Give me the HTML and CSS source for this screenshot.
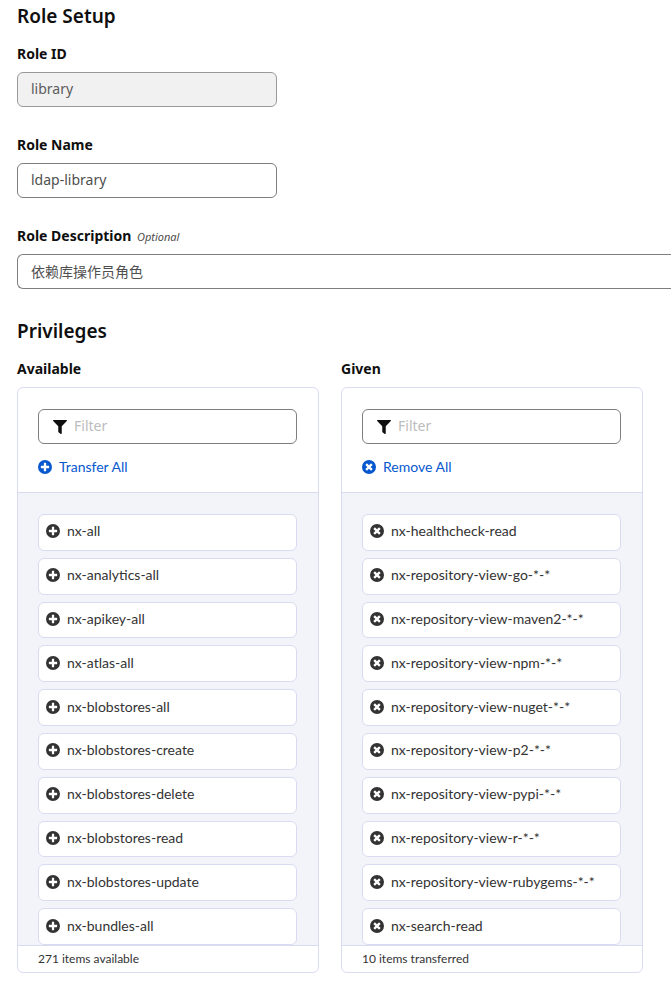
FILE: index.html
```html
<!DOCTYPE html>
<html lang="en">
<head>
<meta charset="utf-8">
<title>Role Setup</title>
<link rel="stylesheet" href="styles.css">
</head>
<body>
<svg class="sprite" aria-hidden="true">
  <symbol id="plus" viewBox="0 0 512 512"><path fill="currentColor" d="M256 0a256 256 0 1 0 0 512 256 256 0 0 0 0-512zm152 284c0 8-6 14-14 14h-96v96c0 8-6 14-14 14h-56c-8 0-14-6-14-14v-96h-96c-8 0-14-6-14-14v-56c0-8 6-14 14-14h96v-96c0-8 6-14 14-14h56c8 0 14 6 14 14v96h96c8 0 14 6 14 14z"/></symbol>
  <symbol id="cross" viewBox="0 0 512 512"><path fill="currentColor" d="M256 0a256 256 0 1 0 0 512 256 256 0 0 0 0-512zm126 322c5 5 5 13 0 18l-42 42c-5 5-13 5-18 0l-66-66-66 66c-5 5-13 5-18 0l-42-42c-5-5-5-13 0-18l66-66-66-66c-5-5-5-13 0-18l42-42c5-5 13-5 18 0l66 66 66-66c5-5 13-5 18 0l42 42c5 5 5 13 0 18l-66 66z"/></symbol>
  <symbol id="filter" viewBox="0 0 512 512"><path fill="currentColor" d="M488 0H24C3 0-8 26 7 41l185 185v206c0 8 4 15 10 20l80 56c16 11 38 0 38-20V226L505 41c15-15 4-41-17-41z"/></symbol>
</svg>
<main class="page">
  <form>
    <section>
      <h2>Role Setup</h2>
      <div class="fields">
        <div class="field">
          <label for="role-id">Role ID</label>
          <input class="text-input short" id="role-id" type="text" value="library" disabled>
        </div>
        <div class="field">
          <label for="role-name">Role Name</label>
          <input class="text-input short" id="role-name" type="text" value="ldap-library">
        </div>
        <div class="field">
          <label for="role-desc">Role Description <span class="optional">Optional</span></label>
          <input class="text-input bleed" id="role-desc" type="text" value="依赖库操作员角色">
        </div>
      </div>
    </section>
    <section>
      <h2>Privileges</h2>
      <div class="transfer">
        <div class="field">
          <label for="filter-available">Available</label>
          <div class="panel">
            <div class="controls">
              <div class="filter">
                <svg class="icon"><use href="#filter"/></svg>
                <input id="filter-available" type="text" placeholder="Filter">
              </div>
              <button class="move-all" type="button"><svg class="icon"><use href="#plus"/></svg>Transfer All</button>
            </div>
            <div class="items">
              <button type="button"><svg class="icon"><use href="#plus"/></svg>nx-all</button>
              <button type="button"><svg class="icon"><use href="#plus"/></svg>nx-analytics-all</button>
              <button type="button"><svg class="icon"><use href="#plus"/></svg>nx-apikey-all</button>
              <button type="button"><svg class="icon"><use href="#plus"/></svg>nx-atlas-all</button>
              <button type="button"><svg class="icon"><use href="#plus"/></svg>nx-blobstores-all</button>
              <button type="button"><svg class="icon"><use href="#plus"/></svg>nx-blobstores-create</button>
              <button type="button"><svg class="icon"><use href="#plus"/></svg>nx-blobstores-delete</button>
              <button type="button"><svg class="icon"><use href="#plus"/></svg>nx-blobstores-read</button>
              <button type="button"><svg class="icon"><use href="#plus"/></svg>nx-blobstores-update</button>
              <button type="button"><svg class="icon"><use href="#plus"/></svg>nx-bundles-all</button>
            </div>
            <div class="count">271 items available</div>
          </div>
        </div>
        <div class="field">
          <label for="filter-given">Given</label>
          <div class="panel">
            <div class="controls">
              <div class="filter">
                <svg class="icon"><use href="#filter"/></svg>
                <input id="filter-given" type="text" placeholder="Filter">
              </div>
              <button class="move-all" type="button"><svg class="icon"><use href="#cross"/></svg>Remove All</button>
            </div>
            <div class="items">
              <button type="button"><svg class="icon"><use href="#cross"/></svg>nx-healthcheck-read</button>
              <button type="button"><svg class="icon"><use href="#cross"/></svg>nx-repository-view-go-*-*</button>
              <button type="button"><svg class="icon"><use href="#cross"/></svg>nx-repository-view-maven2-*-*</button>
              <button type="button"><svg class="icon"><use href="#cross"/></svg>nx-repository-view-npm-*-*</button>
              <button type="button"><svg class="icon"><use href="#cross"/></svg>nx-repository-view-nuget-*-*</button>
              <button type="button"><svg class="icon"><use href="#cross"/></svg>nx-repository-view-p2-*-*</button>
              <button type="button"><svg class="icon"><use href="#cross"/></svg>nx-repository-view-pypi-*-*</button>
              <button type="button"><svg class="icon"><use href="#cross"/></svg>nx-repository-view-r-*-*</button>
              <button type="button"><svg class="icon"><use href="#cross"/></svg>nx-repository-view-rubygems-*-*</button>
              <button type="button"><svg class="icon"><use href="#cross"/></svg>nx-search-read</button>
            </div>
            <div class="count">10 items transferred</div>
          </div>
        </div>
      </div>
    </section>
  </form>
</main>
</body>
</html>
```
FILE: styles.css
```css
* { box-sizing: border-box; }

body {
  margin: 0;
  background: #fff;
  color: #0f0f0f;
  font: 14px/20px "Noto Sans", "Noto Sans CJK SC", sans-serif;
}

.sprite { display: none; }

.page { padding: 2px 28px 18px 17px; }

form {
  display: flex;
  flex-direction: column;
  gap: 28px;
}

h2 {
  margin: 0 0 14px;
  font-size: 19px;
  line-height: 28px;
  font-weight: 600;
}

.fields {
  display: flex;
  flex-direction: column;
  gap: 28px;
}

.field {
  display: flex;
  flex-direction: column;
  gap: 8px;
  min-width: 0;
}

.field > label { font-weight: 700; }

.optional {
  margin-left: 2px;
  color: #4c4c4c;
  font-size: 11px;
  line-height: 1;
  font-style: italic;
  font-weight: 400;
}

input {
  font: inherit;
  color: #4f4f4f;
}

.text-input {
  height: 35px;
  padding: 0 13px 2px;
  border: 1px solid #7e7e7e;
  border-radius: 6px;
  background: #fff;
}

.short {
  width: 100%;
  max-width: 260px;
}

.bleed {
  margin-right: -28px;
  border-right: 0;
  border-radius: 6px 0 0 6px;
}

.text-input:disabled {
  border-color: #999;
  background: #f1f1f1;
  color: #5c5c5c;
}

.transfer {
  display: grid;
  grid-template-columns: 1fr 1fr;
  gap: 22px;
}

.panel {
  overflow: hidden;
  border: 1px solid #d9dbf0;
  border-radius: 6px;
}

.controls { padding: 21px 21px 15px 20px; }

.filter {
  display: flex;
  align-items: center;
  gap: 7px;
  height: 35px;
  padding: 0 14px;
  border: 1px solid #7e7e7e;
  border-radius: 6px;
}

.filter input {
  flex: 1;
  min-width: 0;
  padding: 0 0 2px;
  border: 0;
  outline: 0;
  background: transparent;
}

.filter input::placeholder { color: #bcbcbc; }

.icon {
  flex: none;
  width: 14px;
  height: 14px;
}

button {
  display: flex;
  align-items: center;
  gap: 7px;
  font: 14px/20px Lato, sans-serif;
  cursor: pointer;
}

.move-all {
  margin-top: 13px;
  padding: 0;
  border: 0;
  background: none;
  color: #0758cf;
}

.items {
  display: grid;
  grid-auto-rows: 1fr;
  gap: 7px;
  height: 453px;
  padding: 21px 21px 0 20px;
  border-top: 1px solid #d9dbf0;
  background: #f3f4fa;
}

.items button {
  padding: 0 7px 2px;
  border: 1px solid #d9dbf0;
  border-radius: 6px;
  background: #fff;
  color: #333;
}

.count {
  padding: 3px 20px;
  border-top: 1px solid #d9dbf0;
  color: #333;
  font: 12px/20px Lato, sans-serif;
}
```
